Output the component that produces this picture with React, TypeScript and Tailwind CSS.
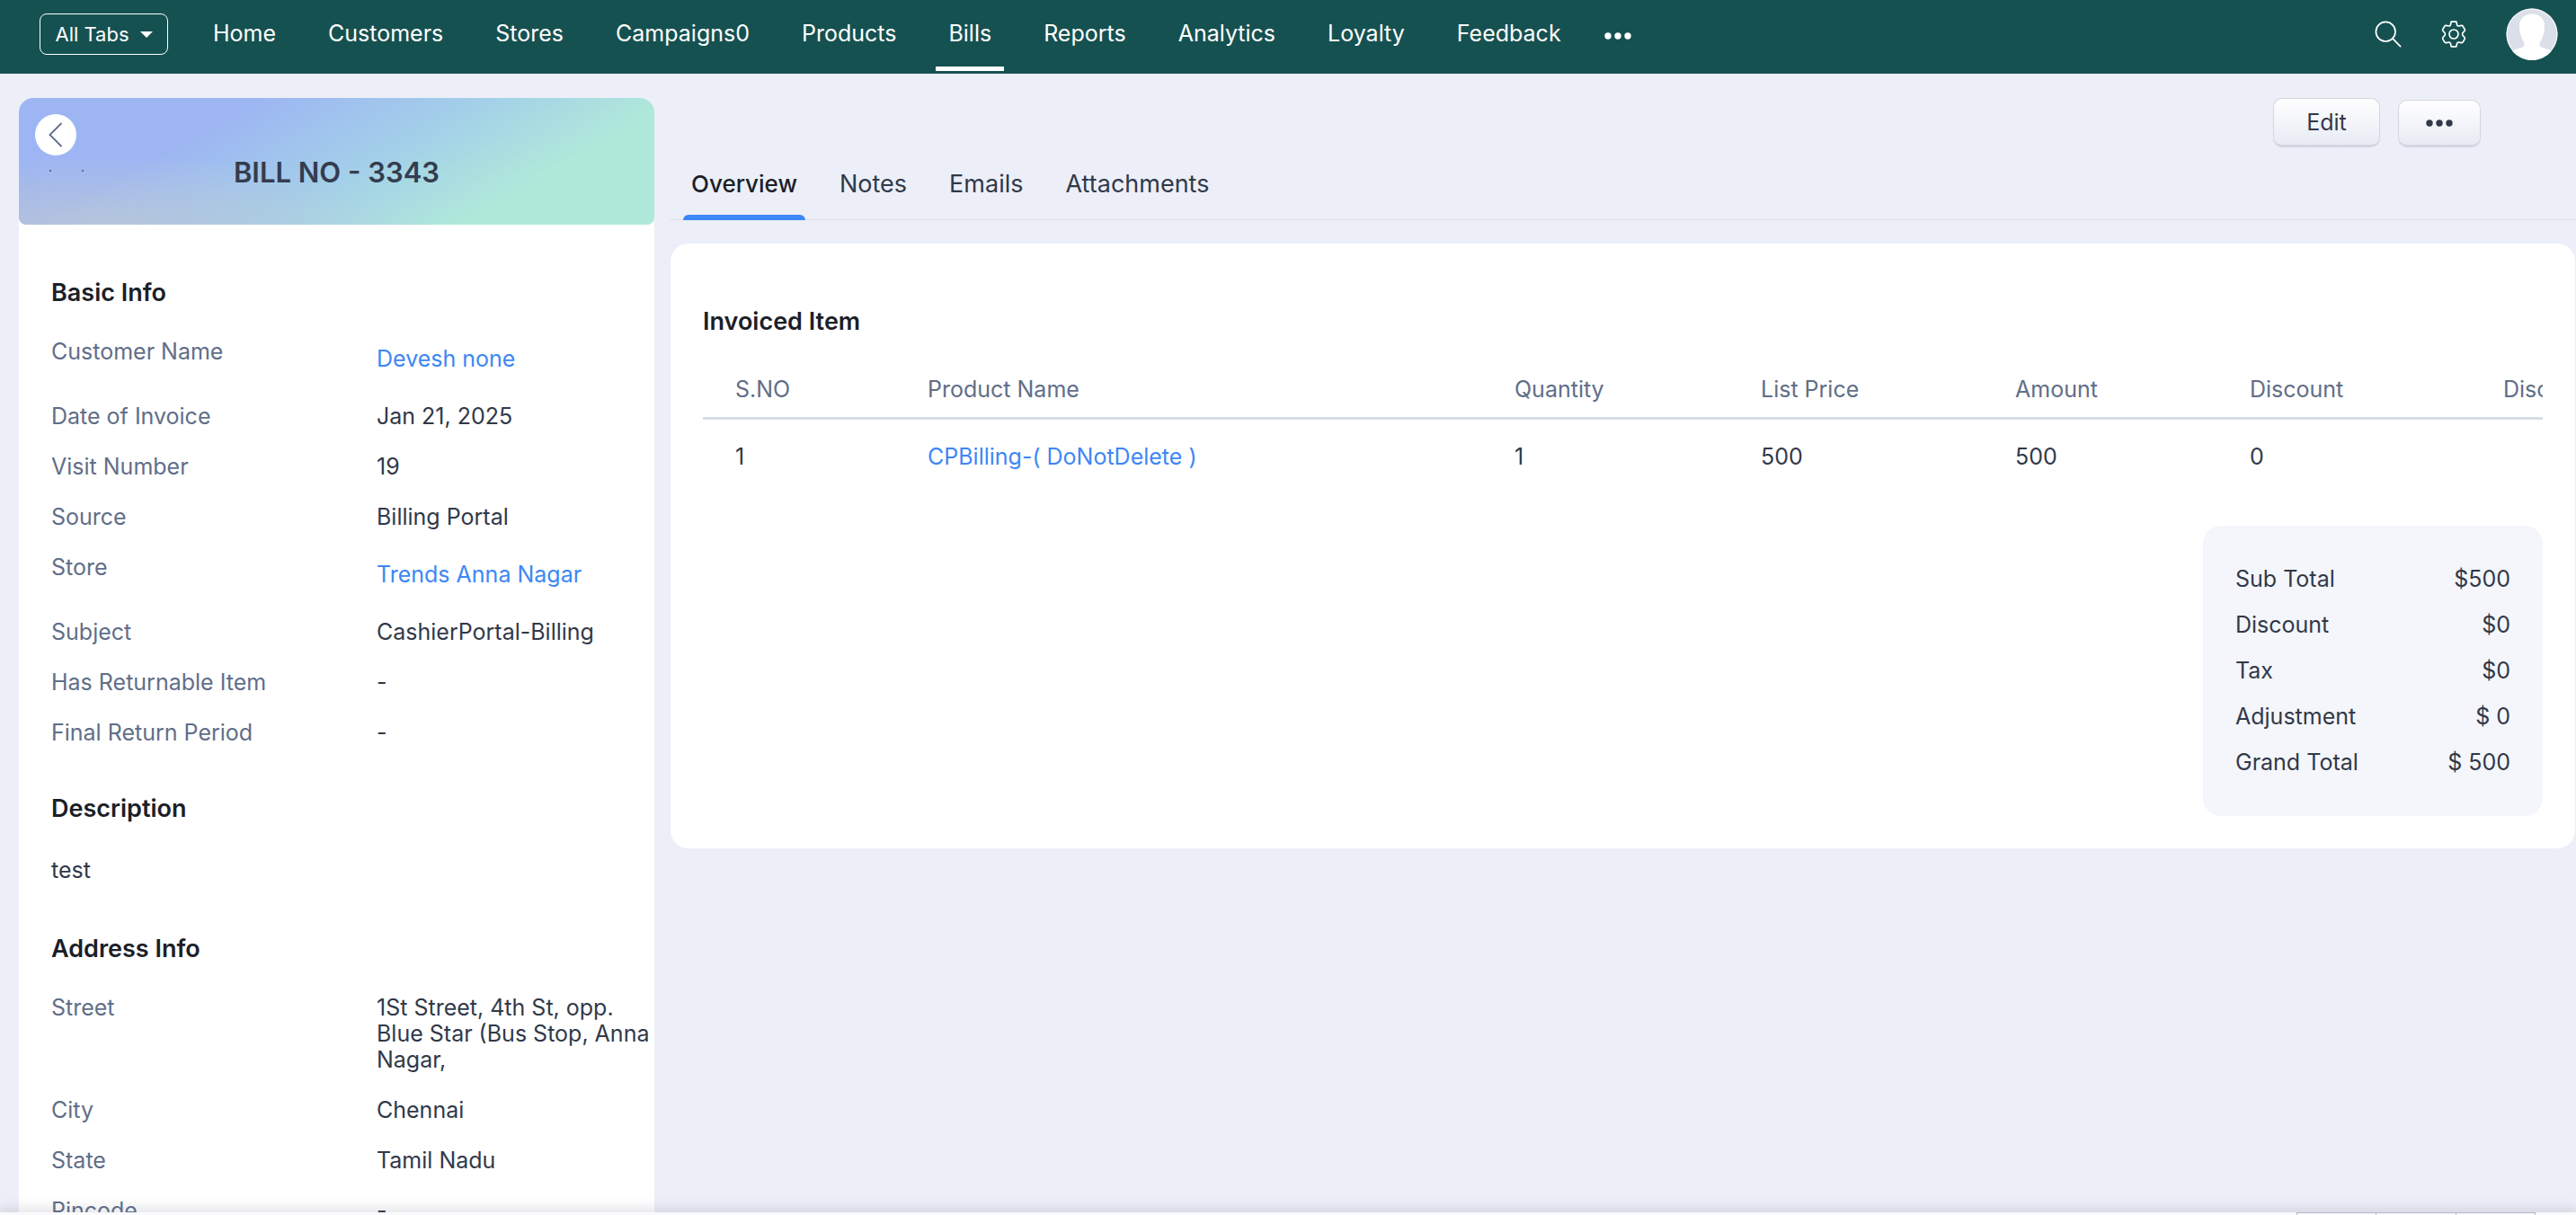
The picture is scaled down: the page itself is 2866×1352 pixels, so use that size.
interface Field {
  label: string;
  value: string;
  href?: string;
}

const NAV_ITEMS = [
  "Home",
  "Customers",
  "Stores",
  "Campaigns0",
  "Products",
  "Bills",
  "Reports",
  "Analytics",
  "Loyalty",
  "Feedback",
];

const BASIC_INFO: Field[] = [
  { label: "Customer Name", value: "Devesh none", href: "#customer" },
  { label: "Date of Invoice", value: "Jan 21, 2025" },
  { label: "Visit Number", value: "19" },
  { label: "Source", value: "Billing Portal" },
  { label: "Store", value: "Trends Anna Nagar", href: "#store" },
  { label: "Subject", value: "CashierPortal-Billing" },
  { label: "Has Returnable Item", value: "-" },
  { label: "Final Return Period", value: "-" },
];

const ADDRESS_INFO: Field[] = [
  { label: "Street", value: "1St Street, 4th St, opp. Blue Star (Bus Stop, Anna Nagar," },
  { label: "City", value: "Chennai" },
  { label: "State", value: "Tamil Nadu" },
  { label: "Pincode", value: "-" },
];

const TABS = ["Overview", "Notes", "Emails", "Attachments"];

const TOTALS = [
  ["Sub Total", "$500"],
  ["Discount", "$0"],
  ["Tax", "$0"],
  ["Adjustment", "$ 0"],
  ["Grand Total", "$ 500"],
];

function Dots({ className }: { className: string }) {
  return (
    <svg viewBox="0 0 30 8" className={className} fill="currentColor" aria-hidden="true">
      <circle cx="4" cy="4" r="3.7" />
      <circle cx="15" cy="4" r="3.7" />
      <circle cx="26" cy="4" r="3.7" />
    </svg>
  );
}

function SearchIcon() {
  return (
    <svg viewBox="0 0 30 30" className="h-[30px] w-[30px]" fill="none" stroke="currentColor" strokeWidth="1.7" aria-hidden="true">
      <circle cx="12.2" cy="12.2" r="10.8" />
      <path d="M20 19.8 28.6 28.6" strokeLinecap="round" />
    </svg>
  );
}

function GearIcon() {
  return (
    <svg viewBox="0 0 28 30" className="h-[30px] w-7" fill="none" stroke="currentColor" strokeWidth="1.7" strokeLinejoin="round" aria-hidden="true">
      <circle cx="14" cy="15" r="5" />
      <path d="M11.2 1.2h5.6l.9 3.6q.3 1.2 1.5 1.2l3.4-.6q1.2-.1 1.7.9l1.9 3.3q.5 1-.3 1.9l-2 2.3q-.7 1.2 0 2.4l2 2.3q.8.9.3 1.9l-1.9 3.3q-.5 1-1.7.9l-3.4-.6q-1.2 0-1.5 1.2l-.9 3.6h-5.6l-.9-3.6q-.3-1.2-1.5-1.2l-3.4.6q-1.2.1-1.7-.9l-1.9-3.3q-.5-1 .3-1.9l2-2.3q.7-1.2 0-2.4l-2-2.3q-.8-.9-.3-1.9l1.9-3.3q.5-1 1.7-.9l3.4.6q1.2 0 1.5-1.2z" />
    </svg>
  );
}

function Avatar() {
  return (
    <svg viewBox="0 0 58 58" className="h-[58px] w-[58px]" aria-hidden="true">
      <circle cx="29" cy="29" r="28.5" fill="#dbdfe9" />
      <path
        d="M29 6.5c-9 0-14.6 6-14 15 .4 7 2.4 12 4.6 15.5 1.8 3.5.7 6.5-2.6 7.3-3.3.8-7.5 1.2-9.6 4a28.5 28.5 0 0 0 43.2 0c-2.1-2.8-6.3-3.2-9.6-4-3.3-.8-4.4-3.8-2.6-7.3 2.2-3.5 4.2-8.5 4.6-15.5.6-9-5-15-14-15z"
        fill="#fff"
      />
      <circle cx="29" cy="29" r="28" fill="none" stroke="#fff" />
    </svg>
  );
}

function TopNav() {
  return (
    <header className="flex h-[82px] shrink-0 items-start bg-[#165151] pl-11 pr-5 text-white">
      <button className="mt-[15px] flex h-[46px] w-[143px] items-center justify-center gap-3 rounded-lg border border-white text-[22px]">
        All Tabs
        <svg viewBox="0 0 14 7" className="h-[7px] w-3.5" fill="currentColor" aria-hidden="true">
          <path d="M0 0h14L7 7z" />
        </svg>
      </button>
      <nav className="ml-9 flex items-start gap-[30px]">
        {NAV_ITEMS.map((item) => (
          <a
            key={item}
            href={`#${item.toLowerCase()}`}
            className={`block h-[79px] border-b-[5px] px-3.5 pt-[22px] text-[25px] leading-[30px] ${item === "Bills" ? "border-white" : "border-transparent"}`}
          >
            {item}
          </a>
        ))}
        <button aria-label="More tabs" className="ml-1 mt-9">
          <Dots className="h-2 w-[30px]" />
        </button>
      </nav>
      <div className="ml-auto flex h-[76px] items-center gap-11">
        <button aria-label="Search">
          <SearchIcon />
        </button>
        <button aria-label="Settings">
          <GearIcon />
        </button>
        <button aria-label="Profile">
          <Avatar />
        </button>
      </div>
    </header>
  );
}

function FieldList({ fields }: { fields: Field[] }) {
  return (
    <dl className="flex flex-col gap-[27px] text-[25px] leading-[29px]">
      {fields.map(({ label, value, href }) => (
        <div key={label} className="flex items-start">
          <dt className="w-[362px] shrink-0 text-[#616e88]">{label}</dt>
          <dd className="min-w-0 flex-1">
            {href ? (
              <a href={href} className="block py-2 text-[#3d87f5]">
                {value}
              </a>
            ) : (
              value
            )}
          </dd>
        </div>
      ))}
    </dl>
  );
}

function Sidebar() {
  return (
    <aside className="w-[707px] shrink-0 overflow-hidden rounded-t-2xl bg-white">
      <div className="relative flex h-[141px] items-center justify-center rounded-b-lg bg-[radial-gradient(ellipse_at_12%_105%,rgba(190,200,212,0.8),transparent_40%),linear-gradient(150deg,#9db5f3_0%,#9db5f3_27%,#a3cfe9_54%,#b0e8da_77%,#b0e8da_100%)] pt-6">
        <button aria-label="Back" className="absolute left-[18px] top-[18px] flex h-[46px] w-[46px] items-center justify-center rounded-full bg-white text-[#616e88]">
          <svg viewBox="0 0 16 28" className="h-7 w-4" fill="none" stroke="currentColor" strokeWidth="1.8" aria-hidden="true">
            <path d="M14.5 1 1.5 14l13 13" />
          </svg>
        </button>
        <svg viewBox="0 0 38 2" className="absolute left-[34px] top-[80px] h-0.5 w-[38px]" fill="#616e88" aria-hidden="true">
          <path d="M0 0h2v2H0zM36 0h2v2h-2z" />
        </svg>
        <h1 className="text-[31px] font-semibold leading-10 text-[#343c4f]">BILL NO - 3343</h1>
      </div>
      <div className="pl-9 pr-1">
        <h2 className="mb-[35px] mt-[60px] text-[27px] font-semibold leading-8 text-[#1b2027]">Basic Info</h2>
        <FieldList fields={BASIC_INFO} />
        <h2 className="mb-[35px] mt-[54px] text-[27px] font-semibold leading-8 text-[#1b2027]">Description</h2>
        <p className="py-[3px] text-[25px] leading-[29px]">test</p>
        <h2 className="mb-[35px] mt-[54px] text-[27px] font-semibold leading-8 text-[#1b2027]">Address Info</h2>
        <FieldList fields={ADDRESS_INFO} />
      </div>
    </aside>
  );
}

function InvoicedItems() {
  return (
    <section className="rounded-[20px] bg-white px-9 pb-9 pt-[71px]">
      <h2 className="text-[27px] font-semibold leading-8 text-[#1b2027]">Invoiced Item</h2>
      <div className="mt-7 overflow-hidden">
        <table className="w-[2160px] table-fixed text-left text-[25px] leading-[30px]">
          <thead>
            <tr className="border-b-[3px] border-[#d8dde8] text-[#616e88]">
              <th className="w-[214px] pb-4 pl-9 pt-4 font-normal">S.NO</th>
              <th className="w-[653px] pl-9 font-normal">Product Name</th>
              <th className="w-[274px] pl-9 font-normal">Quantity</th>
              <th className="w-[283px] pl-9 font-normal">List Price</th>
              <th className="w-[261px] pl-9 font-normal">Amount</th>
              <th className="w-[282px] pl-9 font-normal">Discount</th>
              <th className="whitespace-nowrap pl-9 font-normal">Discount Type</th>
            </tr>
          </thead>
          <tbody>
            <tr>
              <td className="py-[26px] pl-9">1</td>
              <td className="pl-9">
                <a href="#product" className="text-[#3d87f5]">
                  CPBilling-( DoNotDelete )
                </a>
              </td>
              <td className="pl-9">1</td>
              <td className="pl-9">500</td>
              <td className="pl-9">500</td>
              <td className="pl-9">0</td>
              <td />
            </tr>
          </tbody>
        </table>
      </div>
      <dl className="ml-auto mt-9 w-[378px] rounded-[20px] bg-[#f4f6fb] px-9 py-[34px] text-[25px] leading-[51px]">
        {TOTALS.map(([label, amount]) => (
          <div key={label} className="flex justify-between">
            <dt>{label}</dt>
            <dd>{amount}</dd>
          </div>
        ))}
      </dl>
    </section>
  );
}

export default function App() {
  return (
    <div className="relative flex h-screen flex-col overflow-hidden bg-[#eceff8] font-[Inter,sans-serif] text-[#313949]">
      <TopNav />
      <div className="flex min-h-0 flex-1 gap-[18px] pl-[21px] pt-[27px]">
        <Sidebar />
        <main className="min-w-0 flex-1 pr-px">
          <div className="flex items-end justify-end gap-5 pr-[105px]">
            <button className="h-[55px] w-[119px] rounded-[10px] border border-b-[3px] border-[#d3d6e0] bg-linear-to-b from-white to-[#e8ebf4] pt-0.5 text-[25px]">
              Edit
            </button>
            <button aria-label="More actions" className="flex h-[53px] w-[92px] items-center justify-center rounded-[10px] border border-b-[3px] border-[#d3d6e0] bg-linear-to-b from-white to-[#e8ebf4]">
              <Dots className="h-2 w-[30px]" />
            </button>
          </div>
          <div role="tablist" className="mb-[26px] mt-6 flex gap-[29px] border-b border-[#dcdfe9] pl-3.5">
            {TABS.map((tab, i) => (
              <button
                key={tab}
                role="tab"
                aria-selected={i === 0}
                className={
                  i === 0
                    ? "relative -mb-px h-[57px] px-[9px] pb-6 text-[26px] font-medium leading-8 text-[#1b2027] after:absolute after:inset-x-0 after:bottom-0 after:h-1.5 after:rounded-t-md after:bg-[#3d87f5]"
                    : "h-14 px-[9px] pb-[23px] text-[27px] leading-8"
                }
              >
                {tab}
              </button>
            ))}
          </div>
          <InvoicedItems />
        </main>
      </div>
      <footer className="absolute inset-x-0 bottom-0 flex h-[3px] justify-end bg-[#f9fafc] pr-[45px] shadow-[0_-2px_12px_2px_rgba(98,105,130,0.25)]">
        <div className="flex w-[266px] divide-x divide-[#b4b9c8] border-x border-t border-[#b4b9c8]">
          <span className="flex-1" />
          <span className="flex-1" />
          <span className="flex-1" />
        </div>
      </footer>
    </div>
  );
}
